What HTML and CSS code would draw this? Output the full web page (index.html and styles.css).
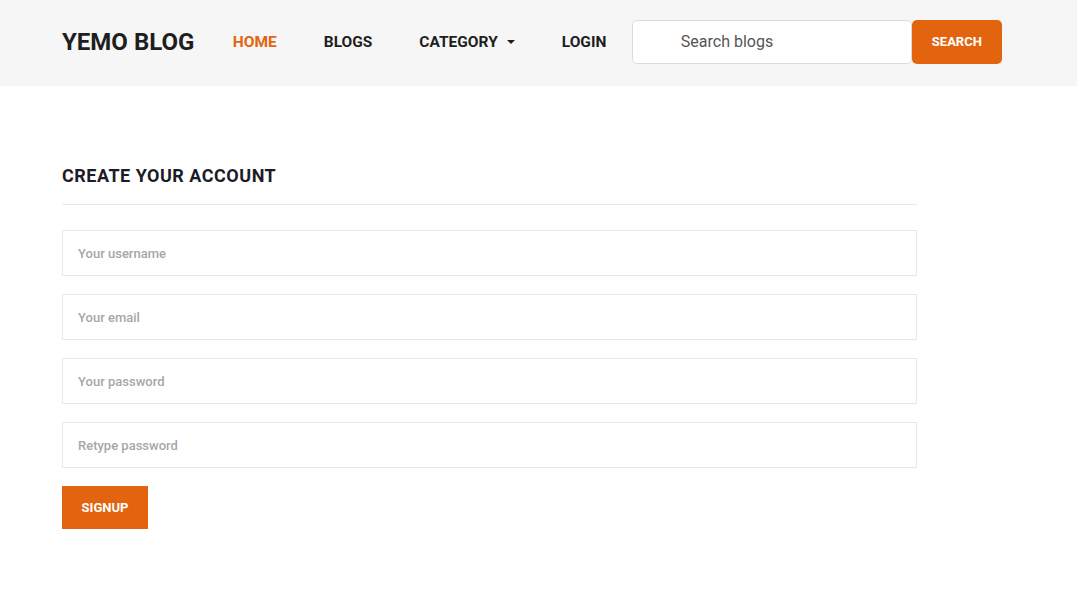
FILE: index.html
```html
<!DOCTYPE html>
<html>
<head>
<meta charset="utf-8">
<link rel="stylesheet" href="styles.css">
</head>
<body>
<header class="topbar">
  <div class="topbar-inner">
    <div class="logo">YEMO BLOG</div>
    <nav class="nav">
      <a class="nav-link active">HOME</a>
      <a class="nav-link">BLOGS</a>
      <a class="nav-link">CATEGORY <span class="caret"></span></a>
      <a class="nav-link">LOGIN</a>
    </nav>
    <form class="search">
      <div class="search-input">Search blogs</div>
      <button class="search-btn" type="button">SEARCH</button>
    </form>
  </div>
</header>
<main class="main">
  <h2 class="title">CREATE YOUR ACCOUNT</h2>
  <div class="rule"></div>
  <div class="form">
    <div class="field">Your username</div>
    <div class="field">Your email</div>
    <div class="field">Your password</div>
    <div class="field">Retype password</div>
    <button class="signup" type="button">SIGNUP</button>
  </div>
</main>
</body>
</html>
```
FILE: styles.css
```css
* { box-sizing: border-box; }
body {
  margin: 0;
  font-family: Roboto, "Liberation Sans", sans-serif;
  background: #fff;
  color: #222;
}
.topbar {
  background: #f6f6f6;
  height: 86px;
}
.topbar-inner {
  display: flex;
  align-items: center;
  height: 86px;
  padding-left: 62px;
  padding-bottom: 3px;
}
.logo {
  font-size: 24px;
  font-weight: 700;
  color: #1e1e1e;
  margin-right: 15px;
}
.nav {
  display: flex;
  align-items: center;
}
.nav-link {
  font-size: 15.5px;
  font-weight: 700;
  color: #1e1e1e;
  padding: 0 23.5px;
  display: flex;
  align-items: center;
}
.nav-link.active { color: #e2640f; }
.caret {
  display: inline-block;
  width: 0;
  height: 0;
  border-left: 4px solid transparent;
  border-right: 4px solid transparent;
  border-top: 4px solid #1e1e1e;
  margin-left: 9px;
}
.search {
  display: flex;
  margin-left: 2px;
}
.search-input {
  width: 280px;
  height: 44px;
  background: #fff;
  border: 1px solid #dcdcdc;
  border-radius: 5px;
  padding-left: 48px;
  display: flex;
  align-items: center;
  font-size: 16px;
  color: #555;
}
.search-btn {
  width: 90px;
  height: 44px;
  background: #e2640f;
  border: none;
  border-radius: 5px;
  color: #fff;
  font-family: Roboto, "Liberation Sans", sans-serif;
  font-size: 13px;
  font-weight: 700;
}
.main {
  padding: 79px 0 0 62px;
  width: 917px;
}
.title {
  margin: 0;
  font-size: 18px;
  font-weight: 700;
  color: #1c1c28;
  letter-spacing: 0.5px;
  line-height: 22px;
}
.rule {
  height: 1px;
  background: #e9e9e9;
  margin-top: 17px;
}
.form {
  display: flex;
  flex-direction: column;
  gap: 18px;
  padding-top: 25px;
}
.field {
  height: 46px;
  border: 1px solid #e8e8e8;
  padding-left: 15px;
  display: flex;
  align-items: center;
  font-size: 13px;
  font-weight: 500;
  color: #a7a7a7;
}
.signup {
  align-self: flex-start;
  width: 86px;
  height: 43px;
  background: #e2640f;
  border: none;
  color: #fff;
  font-family: Roboto, "Liberation Sans", sans-serif;
  font-size: 13px;
  font-weight: 700;
}
```
